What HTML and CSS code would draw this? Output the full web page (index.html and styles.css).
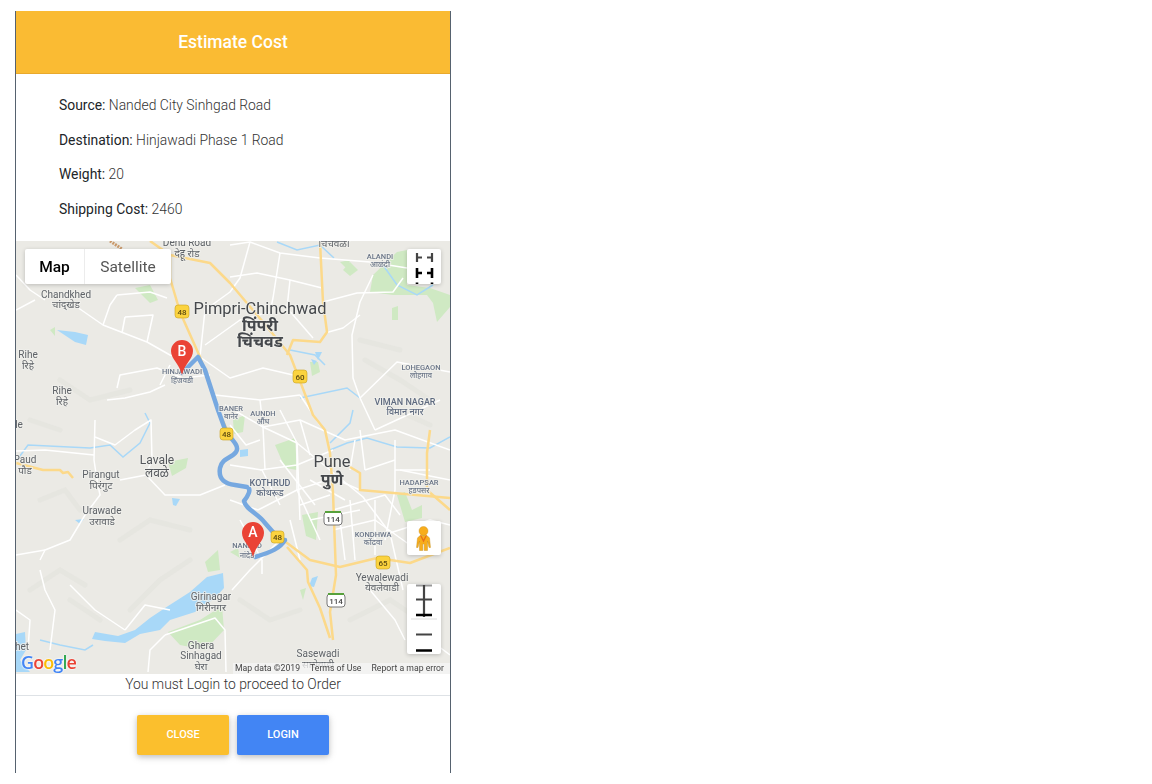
FILE: index.html
```html
<!DOCTYPE html>
<html lang="en">
<head>
<meta charset="utf-8">
<title>Estimate Cost</title>
<link rel="stylesheet" href="styles.css">
</head>
<body>
<div class="modal">
  <header class="modal-head">Estimate Cost</header>
  <section class="details">
    <p><b>Source:</b> Nanded City Sinhgad Road</p>
    <p><b>Destination:</b> Hinjawadi Phase 1 Road</p>
    <p><b>Weight:</b> 20</p>
    <p><b>Shipping Cost:</b> 2460</p>
  </section>
  <div class="map">
    <svg class="map-canvas" viewBox="16 241 434 433" width="434" height="433" aria-label="Map of Pune">
      <rect class="land" x="16" y="241" width="434" height="433"/>
      <g class="hills">
        <polyline points="40,500 65,490 80,510"/><polyline points="30,590 60,570 85,585"/><polyline points="120,540 150,520 190,530"/><polyline points="130,610 160,580 190,560"/><polyline points="60,380 90,400 130,390"/><polyline points="30,420 60,430"/><polyline points="350,620 390,600 420,620"/><polyline points="240,600 270,620 300,610"/><polyline points="365,360 400,380 430,400"/><polyline points="70,600 100,620"/><polyline points="360,340 400,350"/><polyline points="385,405 430,425"/>
      </g>
      <g class="green">
        <path d="M370 292 L373 275 L397 252 L407 250 L407 285 L430 288 L450 295 L450 307 L437 322 L433 303 L427 295 L393 295 Z"/>
        <path d="M343 270 L350 262 L358 270 L350 276 Z"/><path d="M392 308 L398 306 L398 320 L392 320 Z"/>
        <path d="M310 362 L318 362 L320 372 L312 376 Z"/><path d="M340 262 L350 260 L348 270 Z"/>
        <path d="M275 445 L295 438 L297 470 L285 468 Z"/><path d="M302 515 L318 512 L316 540 L306 536 Z"/>
        <path d="M397 495 L405 492 L412 510 L422 505 L422 518 L405 522 Z"/>
        <path d="M168 462 L188 458 L186 468 L172 476 Z"/><path d="M233 420 L245 415 L243 432 L234 434 Z"/>
        <path d="M168 632 L200 620 L222 606 L224 630 L205 650 L180 645 Z"/><path d="M50 330 L55 327 L55 336 Z"/>
        <path d="M205 562 L218 550 L220 570 L208 572 Z"/>
        <path d="M230 552 L238 548 L240 558 Z"/><path d="M135 288 L150 285 L158 300 L150 303 Z"/>
        <path d="M300 590 L306 588 L303 600 Z"/>
      </g>
      <g class="water-fill">
        <path d="M223 573 L207 577 L190 592 L165 608 L150 618 L135 630 L118 636 L95 632 L92 639 L105 641 L125 643 L140 634 L160 630 L170 620 L195 612 L215 598 L224 588 Z"/>
        <path d="M57 330 L75 332 L88 335 L86 345 L75 342 Z"/><path d="M16 634 L25 632 L26 650 L20 660 L30 672 L16 672 Z"/>
        <path d="M172 498 L180 499 L176 506 L173 505 Z"/><path d="M75 520 L84 519 L80 524 Z"/>
        <path d="M312 578 L318 576 L314 587 L309 586 Z"/><path d="M240 450 L248 449 L248 456 L240 457 Z"/>
        <path d="M315 352 L322 352 L318 360 Z"/><path d="M311 359 L317 361 L314 365 Z"/>
      </g>
      <g class="river">
        <polyline points="17,460 28,445 90,448 110,445 123,457 140,443 150,423 145,413"/>
        <polyline points="330,450 347,443 367,438 397,447 430,448 450,437"/>
        <polyline points="330,443 350,423 353,410"/>
        <polyline points="300,398 347,388 360,398"/>
        <polyline points="277,242 297,250 320,245 334,258"/>
        <polyline points="383,265 397,285 417,295 433,285"/>
        <polyline points="40,640 60,645 85,650 93,645"/>
        <polyline points="290,350 315,355 325,365"/>
      </g>
      <g class="road">
        <polyline points="16,275 30,290 45,300"/>
        <polyline points="16,310 35,300"/>
        <polyline points="77,307 103,325 147,342 170,355 185,360"/>
        <polyline points="117,295 110,305 103,325"/>
        <polyline points="117,295 150,292 167,298"/>
        <polyline points="125,317 122,333"/><polyline points="125,317 153,315 147,342"/>
        <polyline points="117,388 120,375 157,368 183,378 210,375"/>
        <polyline points="107,400 125,398 150,392 165,385"/>
        <polyline points="230,245 250,242 280,253 320,258 370,262 407,268"/>
        <polyline points="250,242 240,278 230,292 205,310 200,357"/>
        <polyline points="280,253 273,298 270,312"/>
        <polyline points="230,277 257,273 290,280 322,288"/>
        <polyline points="323,302 357,293 393,292 403,278"/>
        <polyline points="325,333 343,328 360,315"/>
        <polyline points="373,275 360,302 352,335 353,378 360,398"/>
        <polyline points="290,280 287,308 313,338"/>
        <polyline points="360,398 397,362 450,372"/>
        <polyline points="200,357 230,378 263,368 293,375"/>
        <polyline points="205,345 240,320 270,312"/>
        <polyline points="215,395 260,400 300,395"/>
        <polyline points="263,427 297,443 330,470 363,497 390,533 403,590"/>
        <polyline points="225,405 263,427 300,420 345,440 395,430 450,450"/>
        <polyline points="280,410 297,443 297,490 320,540"/>
        <polyline points="297,490 333,478 360,490"/>
        <polyline points="260,470 297,465 333,450"/>
        <polyline points="258,510 297,490"/>
        <polyline points="333,510 385,495 400,515"/>
        <polyline points="333,530 375,520 410,545"/>
        <polyline points="360,430 365,470"/><polyline points="395,440 395,490 385,540"/>
        <polyline points="300,560 290,520"/><polyline points="350,500 355,560"/><polyline points="375,500 375,555"/>
        <polyline points="230,500 258,510"/><polyline points="280,540 250,570 232,590"/>
        <polyline points="170,365 160,385"/>
        <polyline points="95,420 94,460 97,480 100,495 85,515 70,540 45,550 40,560"/>
        <polyline points="95,437 115,445 135,430 151,420 152,460 146,475 120,480"/>
        <polyline points="146,475 165,495 200,495 225,485"/>
        <polyline points="16,451 45,450 94,455"/>
        <polyline points="40,570 45,590 55,610 50,650"/>
        <polyline points="16,555 45,550"/>
        <polyline points="16,610 30,620 28,650"/>
        <polyline points="70,585 95,610 125,630"/>
        <polyline points="125,630 145,605 170,610"/>
        <polyline points="165,635 215,618 225,630 226,672"/>
        <polyline points="165,635 150,650 148,672"/>
        <polyline points="370,590 395,620 405,640"/>
        <polyline points="430,640 450,655"/>
        <polyline points="297,443 300,520"/><polyline points="230,465 262,470 280,505"/>
        <polyline points="340,520 345,560"/><polyline points="355,440 350,470"/>
        <polyline points="400,470 450,480"/><polyline points="300,420 310,455"/>
        <polyline points="310,520 360,510"/><polyline points="390,533 430,520 450,525"/>
        <polyline points="263,427 265,470"/><polyline points="260,400 263,427"/>
        <polyline points="300,395 320,425"/><polyline points="375,430 440,400"/>
        <polyline points="360,398 375,430"/><polyline points="230,425 246,445 260,440"/>
        <polyline points="240,520 262,560 262,574"/><polyline points="395,470 430,470"/>
        <polyline points="310,480 345,500"/><polyline points="280,460 315,505"/>
        <polyline points="330,495 300,505"/><polyline points="365,470 395,460"/>
      </g>
      <g class="hwy">
        <polyline points="150,241 170,255 210,263 230,283 263,322 290,355 313,415 325,430 330,453 333,493 336,575 330,612 333,640"/>
        <polyline points="170,255 170,278 180,312 200,357 218,410 228,432"/>
        <polyline points="320,242 323,302 327,332 320,342 293,340 287,355"/>
        <polyline points="350,467 360,473 360,490 450,498"/>
        <polyline points="430,430 427,453 427,490 450,510"/>
        <polyline points="283,540 310,560 340,567 377,558 410,563 450,548"/>
        <polyline points="287,547 307,570 308,582 320,608 330,638"/>
        <polyline points="16,463 43,470 60,470 63,473 68,472 73,478"/>
      </g>
      <polyline class="hatch" points="110,241 122,249"/>
      <path class="route" d="M182 373 L198 357 L205 370 L218 410 L226 432 C232 440 240 446 236 452 C232 458 222 458 220 468 C218 480 226 484 235 485 L247 487 C252 489 248 496 244 501 C246 510 258 513 265 523 L280 540 L285 540 C280 548 272 552 255 557"/>

      <g class="label sm">
        <text x="187" y="246">Dehu Road</text><text x="187" y="257">देहू रोड</text>
        <text x="334" y="247">चिंचवळी</text>
        <text x="66" y="298">Chandkhed</text><text x="66" y="308">चांद्खेड</text>
        <text x="28" y="358">Rihe</text><text x="28" y="369">रिहे</text>
        <text x="62" y="394">Rihe</text><text x="62" y="405">रिहे</text>
        <text x="19" y="428">le</text>
        <text x="25" y="463">Paud</text><text x="25" y="474">पौड</text>
        <text x="101" y="478">Pirangut</text><text x="101" y="489">पिरंगुट</text>
        <text x="102" y="514">Urawade</text><text x="102" y="525">उरावाडे</text>
        <text x="382" y="581">Yewalewadi</text><text x="382" y="591">येवलेवाडी</text>
        <text x="211" y="600">Girinagar</text><text x="211" y="611">गिरीनगर</text>
        <text x="22" y="650">het</text>
        <text x="201" y="649">Ghera</text><text x="201" y="659">Sinhagad</text><text x="201" y="670">घेरा</text>
        <text x="318" y="657">Sasewadi</text><text x="318" y="668">सासेवाडी</text>
      </g>
      <g class="label bl">
        <text x="380" y="259">ALANDI</text><text x="380" y="267">आळंदी</text>
        <text x="421" y="370">LOHEGAON</text><text x="421" y="378">लोहगाव</text>
        <text x="182" y="374">HINJAWADI</text><text x="182" y="383">हिंजवडी</text>
        <text x="231" y="411">BANER</text><text x="231" y="419">बानेर</text>
        <text x="263" y="416">AUNDH</text><text x="263" y="424">औंध</text>
        <text x="419" y="485">HADAPSAR</text><text x="419" y="493">हडपसर</text>
        <text x="373" y="537">KONDHWA</text><text x="373" y="545">कोंढवा</text>
        <text x="247" y="548">NANDED</text><text x="247" y="558">नांदेड</text>
      </g>
      <g class="label bm">
        <text x="405" y="405">VIMAN NAGAR</text><text x="405" y="415">विमान नगर</text>
        <text x="270" y="486">KOTHRUD</text><text x="270" y="496">कोथरूड</text>
      </g>
      <g class="label md">
        <text x="157" y="464">Lavale</text><text x="157" y="477">लवळे</text>
      </g>
      <g class="label lg">
        <text x="260" y="314">Pimpri-Chinchwad</text><text x="332" y="467">Pune</text>
      </g>
      <g class="label lgb">
        <text x="260" y="331">पिंपरी</text><text x="260" y="347">चिंचवड</text><text x="332" y="485">पुणे</text>
      </g>

      <g class="shield-y">
        <rect x="175" y="305" width="14" height="13" rx="3"/><rect x="220" y="428" width="13" height="12" rx="3"/><rect x="271" y="531" width="13" height="12" rx="3"/><rect x="293" y="370" width="14" height="13" rx="3"/><rect x="376" y="556" width="14" height="13" rx="3"/>
      </g>
      <g class="shield-t">
        <text x="182" y="315">48</text><text x="226.500" y="437">48</text><text x="277.500" y="540">48</text><text x="300" y="380">60</text><text x="383" y="566">65</text>
      </g>
      <g class="shield-w">
        <rect x="324" y="512" width="18" height="13" rx="3"/><rect x="327" y="594" width="18" height="13" rx="3"/>
      </g>
      <g class="shield-g">
        <rect x="325" y="511" width="16" height="2"/><rect x="328" y="593" width="16" height="2"/>
      </g>
      <g class="shield-k">
        <text x="333" y="522">114</text><text x="336" y="604">114</text>
      </g>

      <path class="pin" d="M182 340 a11 11 0 0 1 11 11 c0 8 -8 12 -11 24 c-3 -12 -11 -16 -11 -24 a11 11 0 0 1 11 -11 Z"/>
      <text class="pin-t" x="182" y="356">B</text>
      <path class="pin" d="M253 522 a11 11 0 0 1 11 11 c0 8 -8 12 -11 24 c-3 -12 -11 -16 -11 -24 a11 11 0 0 1 11 -11 Z"/>
      <text class="pin-t" x="253" y="537">A</text>
    </svg>

    <div class="type-ctl">
      <span class="type-btn on">Map</span>
      <span class="type-btn">Satellite</span>
    </div>

    <div class="ctl fullscreen">
      <svg viewBox="0 0 34 35" width="34" height="35">
        <path class="g-dark" d="M10 4v9M10 8.500h5M25 4v9M25 8.500h-5"/>
        <path class="g-black" d="M10 19v10M10 24h5M25 19v10M25 24h-5"/>
        <path class="g-black" d="M10 33.500v2M25 33.500v2"/>
      </svg>
    </div>

    <div class="ctl pegman">
      <svg viewBox="0 0 34 34" width="34" height="34">
        <circle class="peg-head" cx="16.500" cy="10" r="4.500"/>
        <path class="peg-body" d="M13 14.500 H20 L22.500 17 L23.500 26.500 H22 L20.500 20 V29.500 H17.200 V23 H15.800 V29.500 H12.500 V20 L11 26.500 H9.500 L10.500 17 Z"/>
        <path class="peg-v" d="M13 14.500 L16.500 21.500 L20 14.500 H18.600 L16.500 18.500 L14.400 14.500 Z"/>
      </svg>
    </div>

    <div class="ctl zoom">
      <svg viewBox="0 0 34 70" width="34" height="70">
        <path class="g-faint" d="M9 1.500h16"/>
        <path class="g-dark" d="M17 1v32"/>
        <path class="g-dark" d="M9 15.500h16"/>
        <path class="g-black" d="M9 31h16"/>
        <path class="g-sep" d="M4 35h26"/>
        <path class="g-dark" d="M9 50.500h16"/>
        <path class="g-black" d="M9 66.500h16"/>
      </svg>
    </div>

    <div class="google" aria-label="Google"><i class="gb">G</i><i class="gr">o</i><i class="gy">o</i><i class="gb">g</i><i class="gg">l</i><i class="gr">e</i></div>

    <div class="terms">
      <span>Map data ©2019</span><span>Terms of Use</span><span>Report a map error</span>
    </div>
  </div>
  <p class="notice">You must Login to proceed to Order</p>
  <footer class="actions">
    <button class="btn btn-close">CLOSE</button>
    <button class="btn btn-login">LOGIN</button>
  </footer>
</div>
</body>
</html>
```

FILE: styles.css
```css
html, body { margin: 0; padding: 0; background: #fff; }
body { font-family: Roboto, "Liberation Sans", sans-serif; color: #212529; height: 784px; overflow: hidden; }

.modal {
  width: 434px;
  height: 762px;
  margin: 11px 0 0 15px;
  border-left: 1px solid #56626f;
  border-right: 1px solid #56626f;
  display: flex;
  flex-direction: column;
  background: #fff;
}
.modal-head {
  height: 63px;
  flex: none;
  background: #fabb33;
  border-bottom: 1px solid #e9a92c;
  color: #fff;
  font-size: 17.500px;
  font-weight: 500;
  display: flex;
  align-items: center;
  justify-content: center;
  box-sizing: border-box;
}
.details { height: 167px; flex: none; padding: 14px 0 0 43px; box-sizing: border-box; font-size: 13.900px; font-weight: 300; color: #333; }
.details p { margin: 0; height: 34.700px; line-height: 34.700px; }
.details b { font-weight: 400; color: #212529; }

.map { position: relative; height: 433px; flex: none; overflow: hidden; background: #ebeae5; filter: blur(.35px); }
.map-canvas { display: block; }

.land { fill: #ebeae5; }
.hills polyline { fill: none; stroke: #e2e1dc; stroke-width: 5; stroke-linecap: round; opacity: .55; }
.green path { fill: #cfe9c3; }
.water-fill path { fill: #a8d8f8; }
.river polyline { fill: none; stroke: #a8d8f8; stroke-width: 1.500; }
.road polyline { fill: none; stroke: #fff; stroke-width: 1.500; stroke-linejoin: round; }
.hwy polyline { fill: none; stroke: #fcd98a; stroke-width: 2.500; stroke-linejoin: round; }
.hatch { fill: none; stroke: #c9996b; stroke-width: 3; stroke-dasharray: 2 1; }
.route { fill: none; stroke: #76a8e0; stroke-width: 4.500; stroke-linejoin: round; stroke-linecap: round; }

.label text { text-anchor: middle; font-family: Roboto, "Noto Sans", "Noto Sans Devanagari", sans-serif; paint-order: stroke; stroke: rgba(240,240,236,.8); stroke-width: 2px; }
.label.sm text { font-size: 10px; fill: #5f6368; }
.label.bl text { font-size: 7.500px; font-weight: 500; fill: #6b7688; }
.label.bm text { font-size: 9px; font-weight: 500; fill: #5f6b80; }
.label.md text { font-size: 12px; fill: #55585c; }
.label.lg text { font-size: 16.400px; fill: #45484c; }
.label.lgb text { font-size: 16px; font-weight: 700; fill: #45484c; }

.shield-y rect { fill: #fbd33f; stroke: #c9a320; stroke-width: .6; }
.shield-t text { text-anchor: middle; font-family: Roboto, sans-serif; font-size: 8px; font-weight: 500; fill: #5c4a10; }
.shield-w rect { fill: #fff; stroke: #777; stroke-width: 1; }
.shield-g rect { fill: #57a13c; }
.shield-k text { text-anchor: middle; font-family: Roboto, sans-serif; font-size: 8px; font-weight: 500; fill: #444; }

.pin { fill: #ea4335; }
.pin-t { text-anchor: middle; font-family: Roboto, sans-serif; font-size: 14px; font-weight: 500; fill: #fff; }

.type-ctl {
  position: absolute;
  left: 9px;
  top: 8px;
  height: 35px;
  display: flex;
  background: #fff;
  box-shadow: 0 1px 4px rgba(0,0,0,.2);
  border-radius: 2px;
  font-size: 15.500px;
}
.type-btn { display: flex; align-items: center; justify-content: center; width: 86px; color: #565656; }
.type-btn.on { width: 59px; color: #000; font-weight: 500; border-right: 1px solid #ececec; }

.ctl { position: absolute; left: 391px; width: 34px; background: #fff; box-shadow: 0 1px 4px rgba(0,0,0,.2); border-radius: 2px; overflow: hidden; }
.ctl svg { display: block; }
.fullscreen { top: 8px; height: 35px; }
.pegman { top: 280px; height: 34px; }
.zoom { top: 343px; height: 70px; }
.g-dark, .g-black, .g-faint, .g-sep { fill: none; }
.g-dark { stroke: #444; stroke-width: 2.200; }
.g-black { stroke: #000; stroke-width: 2.600; }
.g-faint { stroke: #999; stroke-width: 2; }
.g-sep { stroke: #ddd; stroke-width: 1; }
.peg-head { fill: #f8ad1c; stroke: #c98f1e; stroke-width: .4; }
.peg-body { fill: #f8ad1c; stroke: #bd8a1f; stroke-width: .4; }
.peg-v { fill: #e8711a; }

.google { position: absolute; left: 5px; top: 411px; font-family: "Open Sans", "Liberation Sans", sans-serif; font-size: 18px; font-weight: 600; line-height: 20px; letter-spacing: -.9px; text-shadow: 0 0 2px #fff, 0 0 2px #fff; }
.google i { font-style: normal; }
.gb { color: #4285f4; }
.gr { color: #ea4335; }
.gy { color: #fbbc05; }
.gg { color: #34a853; }

.terms {
  position: absolute;
  right: 0;
  bottom: 0;
  height: 11px;
  padding: 0 6px 0 2px;
  display: flex;
  gap: 10px;
  align-items: flex-start;
  line-height: 10px;
  background: rgba(245,245,245,.75);
  font-size: 8.700px;
  color: #444;
  white-space: nowrap;
}

.notice { margin: 0; height: 22px; flex: none; line-height: 21px; text-align: center; font-size: 13.900px; font-weight: 300; color: #333; border-bottom: 1px solid #dee2e6; box-sizing: border-box; }
.actions { flex: 1; display: flex; justify-content: center; gap: 8px; padding: 19px 0 0 0; box-sizing: border-box; }
.btn {
  width: 92px;
  height: 40px;
  padding: 0 0 1px;
  border: 0;
  border-radius: 2px;
  color: #fff;
  font-family: Roboto, sans-serif;
  font-size: 11px;
  font-weight: 500;
  box-shadow: 0 2px 5px rgba(0,0,0,.16), 0 2px 10px rgba(0,0,0,.12);
}
.btn-close { background: #fbbf2d; }
.btn-login { background: #4285f4; }
```
